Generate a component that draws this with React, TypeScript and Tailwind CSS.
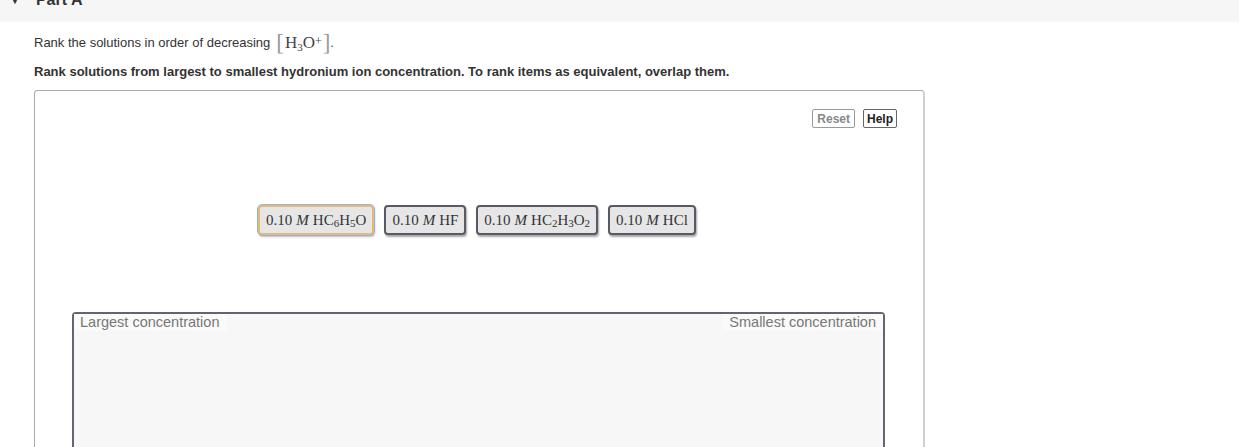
import React from "react";

const serif = { fontFamily: '"Liberation Serif", "Times New Roman", serif' };

function Sub({ c }: { c: string }) {
  return <span className="text-[11px] relative top-[3px]">{c}</span>;
}

function Item({ selected, children }: { selected?: boolean; children: React.ReactNode }) {
  return (
    <div
      className={
        "h-[30px] flex items-center px-[6px] rounded-[4px] bg-[#e6e6e6] text-[15px] text-[#333] " +
        (selected
          ? "border-2 border-[#e9b96e] outline outline-1 outline-[#8fb3e8] shadow-[1px_2px_2px_rgba(0,0,0,0.25)]"
          : "border-2 border-[#5a5a66] shadow-[1px_2px_2px_rgba(0,0,0,0.35)]")
      }
      style={serif}
    >
      {children}
    </div>
  );
}

function M() {
  return <span className="italic mx-[4px]">M</span>;
}

export default function App() {
  return (
    <div className="w-[1239px] h-[447px] overflow-hidden bg-white text-[#333]" style={{ fontFamily: '"Liberation Sans", Arial, sans-serif' }}>
      <div className="h-[22px] bg-[#f6f6f6] overflow-hidden relative">
        <div className="flex items-center -mt-[11px] h-[22px]">
          <span className="ml-[10px] text-[10px] text-[#333]">▼</span>
          <span className="ml-[16px] text-[16px] font-bold text-[#333]">Part A</span>
        </div>
      </div>
      <div className="pl-[34px]">
        <div className="mt-[10px] h-[22px] flex items-center text-[13px] text-[#333]">
          <span>Rank the solutions in order of decreasing</span>
          <span className="ml-[6px] flex items-center text-[#444]" style={serif}>
            <span className="text-[23px] text-[#999] font-light leading-none relative -top-[1px]">[</span>
            <span className="text-[17px] px-[1px]">
              H<Sub c="3" />O<sup className="text-[12px] relative -top-[3px]">+</sup>
            </span>
            <span className="text-[23px] text-[#999] font-light leading-none relative -top-[1px]">]</span>
            <span className="text-[13px]">.</span>
          </span>
        </div>
        <div className="mt-[10px] text-[13px] font-bold text-[#333] leading-[15px]">
          Rank solutions from largest to smallest hydronium ion concentration. To rank items as equivalent, overlap them.
        </div>
        <div className="mt-[11px] w-[891px] h-[400px] border-t border-l border-[#aaa] border-r-2 border-r-[#d0d0d0] rounded-t-[4px]">
          <div className="flex justify-end gap-[8px] pr-[26px] pt-[18px]">
            <button className="h-[19px] px-[4px] border border-[#999] rounded-[2px] text-[12px] font-bold text-[#888] bg-white">Reset</button>
            <button className="h-[19px] px-[3px] border border-[#666] rounded-[2px] text-[12px] font-bold text-[#222] bg-white">Help</button>
          </div>
          <div className="mt-[77px] flex justify-center gap-[10px] pr-[4px]">
            <Item selected>
              0.10<M />HC<Sub c="6" />H<Sub c="5" />O
            </Item>
            <Item>
              0.10<M />HF
            </Item>
            <Item>
              0.10<M />HC<Sub c="2" />H<Sub c="3" />O<Sub c="2" />
            </Item>
            <Item>
              0.10<M />HCl
            </Item>
          </div>
          <div className="mt-[77px] ml-[37px] w-[813px] h-[200px] bg-[#f7f7f7] border-2 border-[#646470] rounded-[4px] flex justify-between items-start">
            <div className="bg-[#fafafa] h-[17px] pl-[6px] pr-[8px] text-[14.5px] text-[#777] leading-[17px]">Largest concentration</div>
            <div className="bg-[#fafafa] h-[17px] pl-[7px] pr-[7px] text-[14.5px] text-[#777] leading-[17px]">Smallest concentration</div>
          </div>
        </div>
      </div>
    </div>
  );
}
